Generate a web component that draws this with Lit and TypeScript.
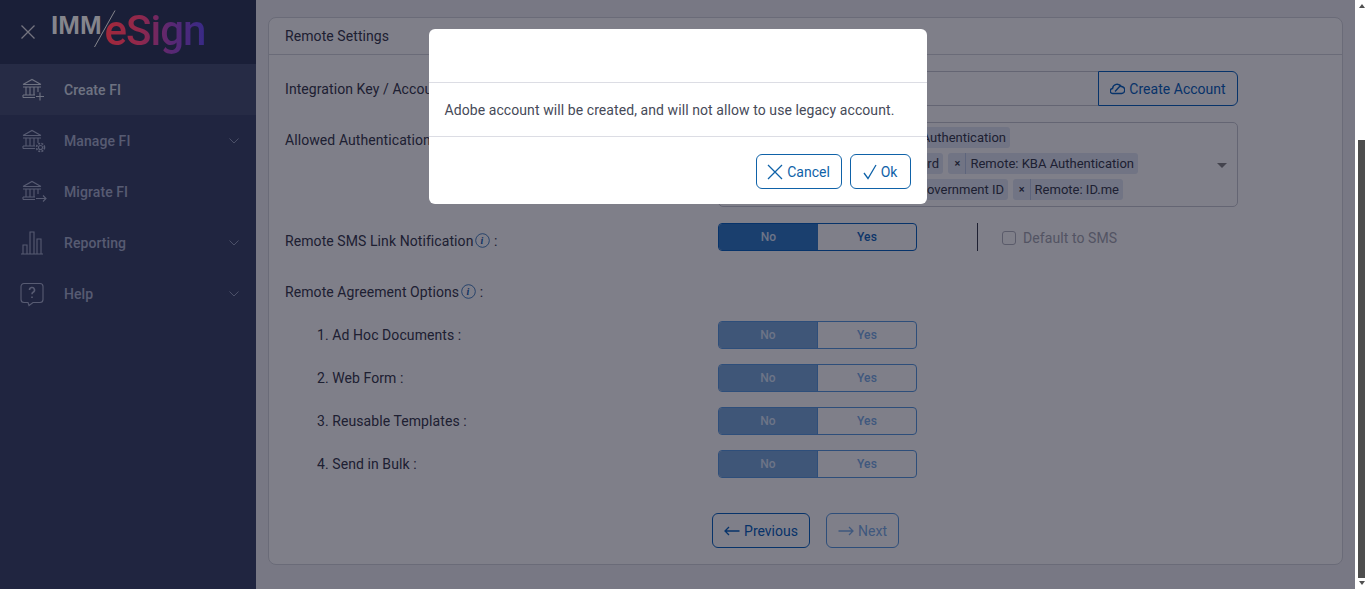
import { LitElement, html, css, svg } from "lit";
import { customElement } from "lit/decorators.js";

const bank = svg`<path d="M3 7.5 12 2.5l9 5M3.5 7.5h17M3 10h18M6 10v8M10 10v8M14 10v8M18 10v5M3 18h12M3 20.5h12M3 18v2.5"/>`;

const menu = [
  { label: "Create FI", active: true, caret: false, icon: svg`${bank}<path d="M20 15.5v8M16 19.5h8"/>` },
  { label: "Manage FI", active: false, caret: true, icon: svg`${bank}<circle cx="20.5" cy="19.5" r="2"/><circle cx="20.5" cy="19.5" r="4" stroke-dasharray="2 1.2" stroke-width="1.6"/>` },
  { label: "Migrate FI", active: false, caret: false, icon: svg`${bank}<path d="M16 19.5h10M23 16.5l3 3-3 3"/>` },
  { label: "Reporting", active: false, caret: true, icon: svg`<path d="M1 24h22M3 24v-9h4v9M10 24V2h4v22M17 24V9h4v15"/>` },
  { label: "Help", active: false, caret: true, icon: svg`<path d="M4 2.5h16a3 3 0 0 1 3 3v13a3 3 0 0 1-3 3h-7l-4 3-1-3H4a3 3 0 0 1-3-3v-13a3 3 0 0 1 3-3z"/><path d="M9.5 9a2.5 2.5 0 1 1 3.6 2.2c-.8.4-1.1 1-1.1 2M12 15.5V17" stroke-width="1.6"/>` },
];

const chipRows = [
  [{ text: "Remote: Phone Authentication", width: 288 }],
  [
    { text: "Remote: Password", width: 221 },
    { text: "Remote: KBA Authentication", width: 190 },
  ],
  [
    { text: "Remote: Government ID", width: 286 },
    { text: "Remote: ID.me", width: 110 },
  ],
];

const agreements = ["1. Ad Hoc Documents :", "2. Web Form :", "3. Reusable Templates :", "4. Send in Bulk :"];

@customElement("app-root")
export class AppRoot extends LitElement {
  static styles = css`
    :host {
      display: block;
      height: 589px;
      overflow: hidden;
      position: relative;
      font-family: Roboto, "Liberation Sans", sans-serif;
      font-size: 14px;
      letter-spacing: 0.08px;
      color: #3c4050;
    }
    .page {
      display: flex;
      height: 589px;
    }
    .sidebar {
      width: 256px;
      flex: none;
      background: #404a6c;
    }
    .brand {
      height: 64px;
      display: flex;
      align-items: center;
      padding-left: 21px;
      background: #343e5c;
    }
    .close {
      width: 14px;
      height: 14px;
      fill: none;
      stroke: #e8e8ea;
      stroke-width: 1.3;
      margin-right: 16px;
    }
    /* the logo sits above the dim layer, its colours are the dimmed ones */
    .logo {
      display: flex;
      align-items: baseline;
      position: relative;
      z-index: 3;
      height: 64px;
      line-height: 64px;
      letter-spacing: 0;
    }
    .imm {
      font-family: "Liberation Sans", sans-serif;
      font-weight: 700;
      font-size: 26px;
      color: #85858c;
      position: relative;
      top: -12px;
    }
    .esign {
      font-family: Roboto, sans-serif;
      font-weight: 500;
      font-size: 42px;
      letter-spacing: -1px;
      margin-left: 3px;
      position: relative;
      top: -1px;
      background: linear-gradient(90deg, #a3283a 0%, #90284c 35%, #5a2872 65%, #382a86 100%);
      -webkit-background-clip: text;
      background-clip: text;
      color: transparent;
    }
    .slash {
      position: absolute;
      left: 42px;
      top: 9px;
      width: 24px;
      height: 40px;
      stroke: #85858c;
      stroke-width: 1;
    }
    .item {
      height: 51px;
      display: flex;
      align-items: center;
      padding-left: 20px;
      padding-right: 17px;
      color: #aeb6d0;
      font-weight: 500;
    }
    .item.active {
      background: #4c5676;
      color: #dde4ee;
    }
    .item svg.ic {
      width: 24px;
      height: 26px;
      fill: none;
      stroke: currentColor;
      stroke-width: 1.1;
      margin-right: 20px;
      flex: none;
      overflow: visible;
    }
    .item span {
      flex: 1;
    }
    .caret {
      width: 10px;
      height: 6px;
      fill: none;
      stroke: #96a0bc;
      stroke-width: 1;
    }
    .main {
      flex: 1;
      background: #f1f1f4;
      padding: 17px 12px 0 12px;
      min-width: 0;
    }
    .card {
      height: 548px;
      box-sizing: border-box;
      background: #fff;
      border: 1px solid #d4d6dc;
      border-radius: 8px;
    }
    .card-head {
      height: 37px;
      box-sizing: border-box;
      border-bottom: 1px solid #d4d6dc;
      padding: 8px 16px 0;
      line-height: 21px;
    }
    .card-body {
      padding: 16px 104px 0 16px;
    }
    .row {
      display: flex;
      align-items: flex-start;
    }
    .lbl {
      width: 433px;
      flex: none;
      padding-top: 8px;
      line-height: 21px;
      white-space: nowrap;
    }
    .key-row { height: 35px; }
    .input {
      flex: 1;
      height: 35px;
      box-sizing: border-box;
      border: 1px solid #c8cad2;
      border-right: 0;
      border-radius: 6px 0 0 6px;
    }
    .create {
      width: 140px;
      height: 35px;
      box-sizing: border-box;
      border: 1px solid #0e66c0;
      border-radius: 0 6px 6px 0;
      background: transparent;
      color: #0e66c0;
      font: inherit;
      letter-spacing: 0.03px;
      display: flex;
      align-items: center;
      justify-content: center;
      gap: 4px;
    }
    .create svg {
      width: 15px;
      height: 13px;
      fill: none;
      stroke: #0e66c0;
      stroke-width: 1.4;
    }
    .auth-row { margin-top: 16px; }
    .multi {
      flex: 1;
      height: 85px;
      box-sizing: border-box;
      border: 1px solid #c8cad2;
      border-radius: 5px;
      padding: 4px 0 0 3px;
      position: relative;
      display: flex;
      flex-direction: column;
      gap: 5px;
    }
    .chips {
      display: flex;
      gap: 5px;
    }
    .chip {
      height: 21px;
      box-sizing: border-box;
      display: flex;
      align-items: center;
      background: #e2e9f5;
      border-radius: 3px;
      font-size: 13px;
      letter-spacing: 0;
      white-space: nowrap;
      overflow: hidden;
      justify-content: flex-end;
      padding-right: 4px;
    }
    .chip b {
      font-weight: 500;
      font-size: 11px;
      padding: 0 5px;
      margin-right: 4px;
      line-height: 21px;
      border-right: 1px solid #bccbe4;
    }
    .drop {
      position: absolute;
      right: 10px;
      top: 40px;
      width: 0;
      height: 0;
      border-left: 5px solid transparent;
      border-right: 5px solid transparent;
      border-top: 5px solid #888;
    }
    .sms-row { margin-top: 16px; height: 28px; }
    .toggle {
      width: 199px;
      height: 28px;
      box-sizing: border-box;
      flex: none;
      display: flex;
      border: 1px solid #0e66c0;
      border-radius: 4px;
      overflow: hidden;
      font-size: 12px;
      font-weight: 500;
      line-height: 26px;
      text-align: center;
    }
    .toggle div { flex: 1; }
    .toggle .no {
      background: #347ec8;
      color: #dae8fa;
      width: 99px;
      flex: none;
    }
    .toggle .yes { color: #1a6cc0; }
    .toggle.off { border-color: #5c9ce0; }
    .toggle.off .no { background: #7eacdc; width: 98px; color: #dae8fa; }
    .toggle.off .yes { color: #7eb0e8; border-left: 1px solid #5c9ce0; }
    .vr {
      width: 1px;
      height: 28px;
      background: #3c4050;
      margin: 0 24px 0 60px;
    }
    .check {
      display: flex;
      align-items: center;
      gap: 7px;
      height: 28px;
      padding-top: 1px;
      color: #a6a8b2;
    }
    .box {
      width: 14px;
      height: 14px;
      box-sizing: border-box;
      border: 1px solid #b4b6c0;
      border-radius: 3px;
    }
    .info {
      width: 15px;
      height: 15px;
      vertical-align: -2px;
      margin-left: 2px;
      fill: none;
      stroke: #1e64b0;
      stroke-width: 0.8;
    }
    .info text {
      font: italic 700 10px "Liberation Serif", serif;
      fill: #1e64b0;
      stroke: none;
      letter-spacing: 0;
    }
    .agree-head {
      margin-top: 31px;
      line-height: 20px;
    }
    .agree {
      margin-top: 15px;
      align-items: center;
      height: 28px;
    }
    .agree-first { margin-top: 19px; }
    .agree .lbl {
      padding: 0 0 0 32px;
      box-sizing: border-box;
    }
    .nav {
      margin-top: 35px;
      display: flex;
      gap: 16px;
      padding-left: 427px;
    }
    .btn {
      height: 35px;
      box-sizing: border-box;
      display: flex;
      align-items: center;
      justify-content: center;
      gap: 4px;
      background: transparent;
      border: 1px solid #0e66c0;
      border-radius: 6px;
      color: #0e66c0;
      font: inherit;
      letter-spacing: 0;
      padding: 0;
    }
    .btn svg {
      fill: none;
      stroke: currentColor;
      stroke-width: 1.3;
      flex: none;
    }
    .prev { width: 98px; }
    .next { width: 73px; border-color: #5c9ce0; color: #7eb0e8; }
    .scrollbar {
      width: 11px;
      flex: none;
      box-sizing: border-box;
      padding-bottom: 4px;
      background: #fff;
      position: relative;
      z-index: 2;
      display: flex;
      flex-direction: column;
      align-items: center;
    }
    .up, .down {
      width: 0;
      height: 0;
      margin-left: 2px;
      border-left: 3.5px solid transparent;
      border-right: 3.5px solid transparent;
    }
    .up {
      margin-top: 4px;
      border-bottom: 4px solid #505050;
    }
    .down {
      margin-top: 3px;
      border-top: 4px solid #505050;
    }
    .thumb {
      width: 7px;
      height: 438px;
      margin: auto 0 0 2px;
      background: #4d4d4d;
    }
    .overlay {
      position: absolute;
      left: 0;
      top: 0;
      right: 11px;
      bottom: 0;
      background: rgba(0, 0, 20, 0.5);
      display: flex;
      justify-content: center;
      align-items: flex-start;
      padding-top: 29px;
    }
    .modal {
      width: 498px;
      height: 175px;
      background: #fff;
      border-radius: 6px;
      box-sizing: border-box;
      color: #464a58;
    }
    .modal-head {
      height: 54px;
      box-sizing: border-box;
      border-bottom: 1px solid #dcdde4;
    }
    .modal-body {
      height: 54px;
      box-sizing: border-box;
      border-bottom: 1px solid #dcdde4;
      padding: 0 16px;
      display: flex;
      align-items: center;
      white-space: nowrap;
    }
    .modal-foot {
      display: flex;
      justify-content: flex-end;
      gap: 8px;
      padding: 17px 16px 0 0;
    }
    .cancel { width: 86px; border-color: #0f62a8; color: #0f62a8; }
    .ok { width: 61px; border-color: #0f62a8; color: #0f62a8; }
  `;

  private infoIcon() {
    return html`<svg class="info" viewBox="0 0 15 15">
      <circle cx="7.5" cy="7.5" r="6.8"></circle>
      <text x="5.6" y="11">i</text>
    </svg>`;
  }

  private toggle(off: boolean) {
    return html`<div class="toggle ${off ? "off" : ""}">
      <div class="no">No</div>
      <div class="yes">Yes</div>
    </div>`;
  }

  render() {
    return html`
      <div class="page">
        <aside class="sidebar">
          <div class="brand">
            <svg class="close" viewBox="0 0 14 14"><path d="M.5.5l13 13M13.5.5l-13 13" /></svg>
            <div class="logo">
              <span class="imm">IMM</span>
              <svg class="slash" viewBox="0 0 24 40"><path d="M1.5 38 22 1.5" /></svg>
              <span class="esign">eSign</span>
            </div>
          </div>
          ${menu.map(
            (m) => html`<div class="item ${m.active ? "active" : ""}">
              <svg class="ic" viewBox="0 0 24 26">${m.icon}</svg>
              <span>${m.label}</span>
              ${m.caret
                ? html`<svg class="caret" viewBox="0 0 10 6"><path d="M.5.5 5 5 9.5.5" /></svg>`
                : ""}
            </div>`
          )}
        </aside>

        <main class="main">
          <section class="card">
            <div class="card-head">Remote Settings</div>
            <div class="card-body">
              <div class="row key-row">
                <div class="lbl">Integration Key / Account ID :</div>
                <div class="input"></div>
                <button class="create">
                  <svg viewBox="0 0 15 13">
                    <path d="M4 11.5H3a2.5 2.5 0 0 1-.4-5A4.5 4.5 0 0 1 11 4.5a3.5 3.5 0 0 1 .5 7z" />
                    <path d="M5 9.5 11 3" />
                  </svg>
                  Create Account
                </button>
              </div>

              <div class="row auth-row">
                <div class="lbl">Allowed Authentication :</div>
                <div class="multi">
                  ${chipRows.map(
                    (r) => html`<div class="chips">
                      ${r.map(
                        (c) => html`<div class="chip" style="width:${c.width}px"><b>×</b>${c.text}</div>`
                      )}
                    </div>`
                  )}
                  <div class="drop"></div>
                </div>
              </div>

              <div class="row sms-row">
                <div class="lbl">Remote SMS Link Notification${this.infoIcon()} :</div>
                ${this.toggle(false)}
                <div class="vr"></div>
                <div class="check"><div class="box"></div>Default to SMS</div>
              </div>

              <div class="agree-head">Remote Agreement Options${this.infoIcon()} :</div>

              ${agreements.map(
                (a, i) => html`<div class="row agree ${i === 0 ? "agree-first" : ""}">
                  <div class="lbl">${a}</div>
                  ${this.toggle(true)}
                </div>`
              )}

              <div class="nav">
                <button class="btn prev">
                  <svg width="16" height="10" viewBox="0 0 16 10"><path d="M15.5 5H1M5 1 1 5l4 4" /></svg>
                  Previous
                </button>
                <button class="btn next">
                  <svg width="16" height="10" viewBox="0 0 16 10"><path d="M.5 5H15M11 1l4 4-4 4" /></svg>
                  Next
                </button>
              </div>
            </div>
          </section>
        </main>

        <div class="scrollbar">
          <div class="up"></div>
          <div class="thumb"></div>
          <div class="down"></div>
        </div>
      </div>

      <div class="overlay">
        <div class="modal">
          <div class="modal-head"></div>
          <div class="modal-body">Adobe account will be created, and will not allow to use legacy account.</div>
          <div class="modal-foot">
            <button class="btn cancel">
              <svg width="16" height="16" viewBox="0 0 16 16"><path d="M1 1l14 14M15 1 1 15" /></svg>
              Cancel
            </button>
            <button class="btn ok">
              <svg width="14" height="16" viewBox="0 0 14 16"><path d="M1 9l4 5.5L13 1" /></svg>
              Ok
            </button>
          </div>
        </div>
      </div>
    `;
  }
}
